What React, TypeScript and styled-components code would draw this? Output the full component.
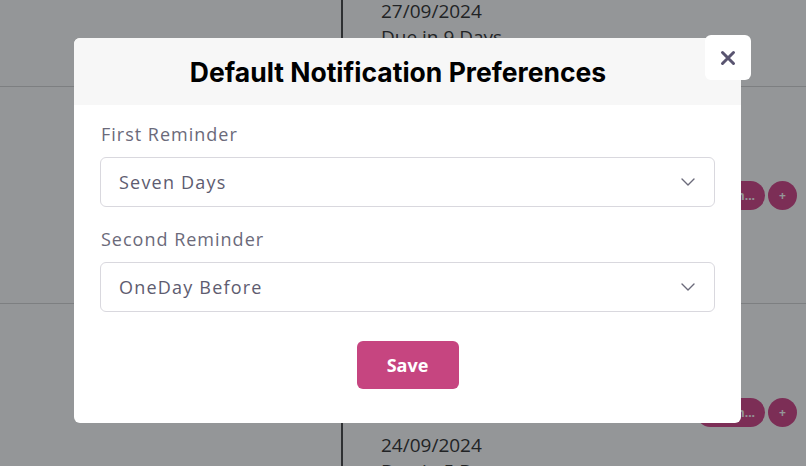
import React from 'react'
import styled, { createGlobalStyle } from 'styled-components'

const GlobalStyle = createGlobalStyle`
  html, body {
    margin: 0;
    padding: 0;
    width: 806px;
    height: 466px;
    overflow: hidden;
    background: #ffffff;
    font-family: 'Open Sans', 'Liberation Sans', sans-serif;
  }
`

const Page = styled.div`
  position: relative;
  width: 806px;
  height: 466px;
  overflow: hidden;
`

const Table = styled.div`
  margin-top: -130px;
`

const Row = styled.div`
  display: grid;
  grid-template-columns: 343px 1fr;
  height: 216px;
  border-bottom: 1px solid #d6d6d6;
`

const NameCell = styled.div`
  display: flex;
  align-items: center;
  justify-content: center;
  border-right: 2px solid #4a4a4a;
  font-size: 19px;
  color: #333;
`

const DueCell = styled.div`
  display: flex;
  align-items: center;
  justify-content: space-between;
  padding: 0 9px 0 38px;
`

const DueInfo = styled.div`
  display: flex;
  flex-direction: column;
  padding-top: 92px;
  font-size: 19px;
  line-height: 26px;
  color: #333;
`

const Actions = styled.div`
  display: flex;
  gap: 3px;
`

const Pill = styled.span<{ $round?: boolean }>`
  display: flex;
  align-items: center;
  justify-content: center;
  height: 29px;
  min-width: 29px;
  padding: ${p => (p.$round ? '0' : '0 10px')};
  border-radius: 15px;
  background: #d4478a;
  color: #fff;
  font-size: 12px;
  font-weight: 700;
`

const Backdrop = styled.div`
  position: absolute;
  inset: 0;
  background: rgba(12, 16, 20, 0.44);
  display: flex;
  justify-content: center;
  align-items: flex-start;
  padding: 38px 0 0 9px;
`

const Modal = styled.div`
  position: relative;
  width: 667px;
  background: #fff;
  border-radius: 6px;
`

const Header = styled.div`
  display: flex;
  align-items: center;
  justify-content: center;
  height: 67px;
  padding-right: 19px;
  background: #f7f7f7;
  border-radius: 6px 6px 0 0;
`

const Title = styled.h2`
  margin: 0;
  font-family: Inter, 'Liberation Sans', sans-serif;
  font-size: 26.5px;
  font-weight: 700;
  color: #000;
`

const CloseButton = styled.button`
  position: absolute;
  top: -3px;
  right: -10px;
  width: 46px;
  height: 45px;
  display: flex;
  align-items: center;
  justify-content: center;
  border: none;
  border-radius: 6px;
  background: #fff;
  padding: 0;
  cursor: pointer;
`

const Body = styled.div`
  display: flex;
  flex-direction: column;
  padding: 17px 26px 34px;
`

const Field = styled.div`
  display: flex;
  flex-direction: column;
  gap: 11px;
  margin-bottom: 20px;
`

const Label = styled.label`
  padding-left: 1px;
  font-size: 18px;
  line-height: 24px;
  letter-spacing: 1px;
  color: #6b6a7a;
`

const SelectBox = styled.div`
  display: flex;
  align-items: center;
  justify-content: space-between;
  height: 50px;
  box-sizing: border-box;
  padding: 0 19px 0 18px;
  border: 1px solid #d9d8de;
  border-radius: 6px;
  font-size: 18px;
  letter-spacing: 1.2px;
  color: #5e5c70;
`

const Footer = styled.div`
  display: flex;
  justify-content: center;
  padding-top: 9px;
`

const SaveButton = styled.button`
  width: 102px;
  height: 48px;
  border: none;
  border-radius: 6px;
  background: #c64580;
  color: #fff;
  font-family: 'Open Sans', 'Liberation Sans', sans-serif;
  font-size: 18px;
  font-weight: 700;
  cursor: pointer;
`

const Chevron = () => (
  <svg width='14' height='8' viewBox='0 0 14 8' fill='none'>
    <polyline points='1,1 7,7 13,1' stroke='#6b6a7a' strokeWidth='1.4' strokeLinecap='round' strokeLinejoin='round' />
  </svg>
)

const rows = [
  { name: 'Company Filing', date: '27/09/2024', due: 'Due in 9 Days' },
  { name: 'Annual Return', date: '25/09/2024', due: 'Due in 7 Days' },
  { name: 'VAT Return', date: '24/09/2024', due: 'Due in 5 Days' }
]

const App: React.FC = () => (
  <>
    <GlobalStyle />
    <Page>
      <Table>
        {rows.map((row, index) => (
          <Row key={index}>
            <NameCell>{row.name}</NameCell>
            <DueCell>
              <DueInfo>
                <span>{row.date}</span>
                <span>{row.due}</span>
              </DueInfo>
              <Actions>
                <Pill>Remin...</Pill>
                <Pill $round>+</Pill>
              </Actions>
            </DueCell>
          </Row>
        ))}
      </Table>
      <Backdrop>
        <Modal>
          <Header>
            <Title>Default Notification Preferences</Title>
          </Header>
          <CloseButton aria-label='Close'>
            <svg width='16' height='16' viewBox='0 0 16 16'>
              <path d='M2.5 2.5 L13.5 13.5 M13.5 2.5 L2.5 13.5' stroke='#595470' strokeWidth='3' strokeLinecap='round' />
            </svg>
          </CloseButton>
          <Body>
            <Field>
              <Label>First Reminder</Label>
              <SelectBox>
                <span>Seven Days</span>
                <Chevron />
              </SelectBox>
            </Field>
            <Field>
              <Label>Second Reminder</Label>
              <SelectBox>
                <span>OneDay Before</span>
                <Chevron />
              </SelectBox>
            </Field>
            <Footer>
              <SaveButton>Save</SaveButton>
            </Footer>
          </Body>
        </Modal>
      </Backdrop>
    </Page>
  </>
)

export default App
